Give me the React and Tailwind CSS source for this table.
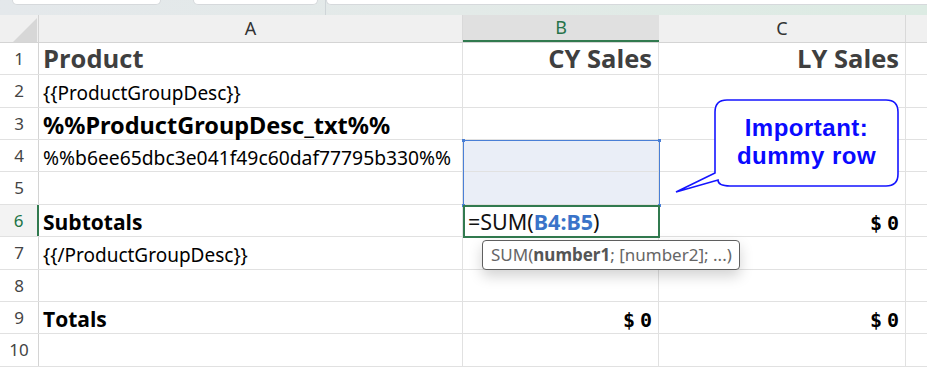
import React from 'react';

const rowHeights = [32, 33, 32, 32, 33, 32, 33, 32, 32, 33];

const Cell = ({ w, className = '', children }) => (
  <div className={`h-full shrink-0 border-r border-[#e1e1e1] flex items-center px-[4px] overflow-visible whitespace-nowrap ${w} ${className}`}>
    {children}
  </div>
);

const Money = () => (
  <span className="flex gap-[5px] font-['DejaVu_Sans_Mono'] font-bold text-[20px] text-black">
    <span>$</span>
    <span>0</span>
  </span>
);

const rows = [
  {
    a: <span className="font-['Open_Sans'] font-bold text-[25.5px] text-[#3f3f3f]">Product</span>,
    b: <span className="font-['Open_Sans'] font-bold text-[25.5px] text-[#3f3f3f]">CY Sales</span>,
    c: <span className="font-['Open_Sans'] font-bold text-[25.5px] text-[#3f3f3f]">LY Sales</span>,
  },
  { a: <span className="font-['Noto_Sans'] text-[19px] text-black">{'{{ProductGroupDesc}}'}</span> },
  { a: <span className="font-['Noto_Sans'] font-bold text-[23.5px] text-black">%%ProductGroupDesc_txt%%</span> },
  { a: <span className="font-['Noto_Sans'] text-[19.3px] text-black">%%b6ee65dbc3e041f49c60daf77795b330%%</span> },
  {},
  {
    a: <span className="font-['Open_Sans'] font-bold text-[21px] text-black">Subtotals</span>,
    c: <Money />,
    active: true,
  },
  { a: <span className="font-['Noto_Sans'] text-[19px] text-black">{'{{/ProductGroupDesc}}'}</span> },
  {},
  {
    a: <span className="font-['Open_Sans'] font-bold text-[21px] text-black">Totals</span>,
    b: <Money />,
    c: <Money />,
  },
  {},
];

export default function App() {
  return (
    <div className="relative w-[927px] h-[374px] overflow-hidden bg-white font-['Noto_Sans']">
      {/* bandeau du ruban */}
      <div className="h-[15px] flex bg-gradient-to-r from-[#e4e8eb] via-[#e3eae8] to-[#dcebe3]">
        <div className="ml-[12px] w-[149px] h-[5px] bg-white rounded-b-[6px] border border-t-0 border-[#d6d9dc]" />
        <div className="ml-[32px] w-[125px] h-[5px] bg-white rounded-b-[6px] border border-t-0 border-[#d6d9dc]" />
        <div className="ml-[7px] w-[1px] h-[15px] bg-[#cfd5d8]" />
        <div className="flex-1 h-[5px] bg-white rounded-bl-[6px] border-b border-l border-[#d6d9dc]" />
      </div>

      {/* en-têtes de colonnes */}
      <div className="h-[28px] flex bg-[#f0f0f0] border-b border-[#d4d4d4] text-[18px] text-[#333]">
        <div className="w-[39px] h-full shrink-0 border-r border-[#d4d4d4] relative">
          <svg className="absolute left-[13px] top-[3px]" width="24" height="24" viewBox="0 0 24 24">
            <polygon points="24,0 24,24 0,24" fill="#d7d7d7" />
          </svg>
        </div>
        <div className="w-[424px] h-full shrink-0 border-r border-[#d9d9d9] flex items-center justify-center">A</div>
        <div className="w-[196px] h-full shrink-0 bg-[#e0e0e0] border-b-2 border-[#317a4f] flex items-center justify-center text-[#27734a]">B</div>
        <div className="w-[247px] h-full shrink-0 border-r border-[#d9d9d9] flex items-center justify-center">C</div>
        <div className="flex-1" />
      </div>

      {/* lignes */}
      {rows.map((r, i) => (
        <div
          key={i}
          style={{ height: rowHeights[i] }}
          className="flex border-b border-[#e1e1e1] box-border"
        >
          <div
            className={`w-[39px] h-full shrink-0 flex items-center justify-center text-[17px] border-r ${
              r.active ? 'text-[#217346] border-[#317a4f] border-r-2 bg-[#f3f3f3]' : 'text-[#444] border-[#d4d4d4]'
            }`}
          >
            {i + 1}
          </div>
          <Cell w="w-[424px]" className={i === 0 ? '' : 'pt-[5px]'}>{r.a}</Cell>
          <Cell w="w-[196px]" className={`justify-end !pr-[6px] ${i === 0 ? '' : 'pt-[5px]'} ${i === 3 || i === 4 ? 'bg-[#eaeef7]' : ''}`}>
            {r.b}
          </Cell>
          <Cell w="w-[247px]" className={`justify-end !pr-[6px] ${i === 0 ? '' : 'pt-[5px]'}`}>{r.c}</Cell>
          <div className="flex-1" />
        </div>
      ))}

      {/* sélection B4:B5 */}
      <div className="absolute left-[463px] top-[140px] w-[197px] h-[66px] border border-[#4a7fd6]">
        <div className="absolute -left-[2px] -top-[2px] w-[3px] h-[3px] bg-[#4a7fd6]" />
        <div className="absolute -right-[2px] -top-[2px] w-[3px] h-[3px] bg-[#4a7fd6]" />
        <div className="absolute -left-[2px] -bottom-[2px] w-[3px] h-[3px] bg-[#4a7fd6]" />
        <div className="absolute -right-[2px] -bottom-[2px] w-[3px] h-[3px] bg-[#4a7fd6]" />
      </div>

      {/* cellule active B6 */}
      <div className="absolute left-[463px] top-[205px] w-[197px] h-[33px] border-2 border-[#317a4f] bg-white flex items-center pl-[3px] pt-[2px] text-[21.5px] text-[#111] font-['Noto_Sans'] whitespace-nowrap">
        =SUM(<span className="text-[#3a73c9] font-bold">B4:B5</span>)
      </div>

      {/* infobulle de formule */}
      <div className="absolute left-[482px] top-[240px] w-[258px] h-[30px] rounded-[4px] border-[1.5px] border-[#5f5f5f] bg-white shadow-[0_6px_14px_rgba(0,0,0,0.18)] flex items-center pl-[8px] text-[17px] text-[#666] whitespace-nowrap font-['Noto_Sans']">
        SUM(<span className="font-bold text-[#555]">number1</span>; [number2]; ...)
      </div>

      {/* bulle "Important" */}
      <svg className="absolute left-[670px] top-[95px]" width="240" height="105" viewBox="0 0 240 105">
        <path
          d="M57 5 H216 Q228 5 228 17 V79 Q228 91 216 91 H60 Q48 91 48 85 L6 97 L45 78 V17 Q45 5 57 5 Z"
          fill="white"
          stroke="#1414ff"
          strokeWidth="1.6"
        />
      </svg>
      <div className="absolute left-[715px] top-[99px] w-[183px] h-[86px] flex flex-col items-center justify-center text-[#0a0aff] font-['Liberation_Sans'] font-bold text-[24px] leading-[28px] tracking-[0.5px]">
        <span>Important:</span>
        <span>dummy row</span>
      </div>
    </div>
  );
}
